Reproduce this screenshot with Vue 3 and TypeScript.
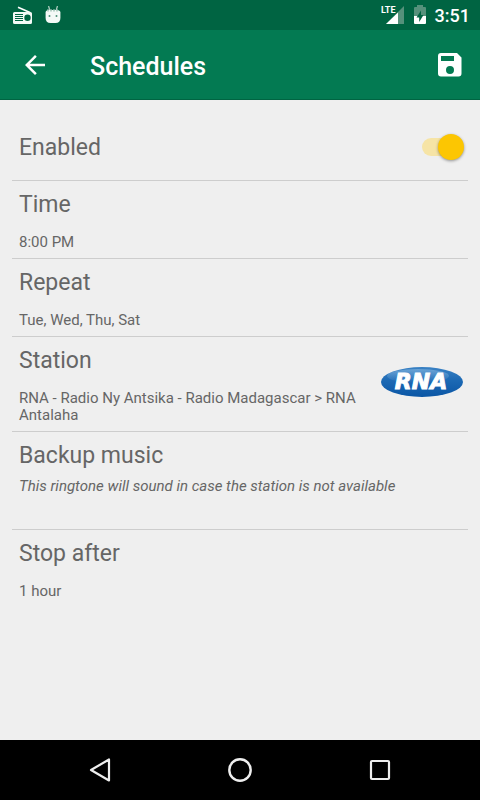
<script setup lang="ts">
import { ref } from 'vue'

interface Setting {
  title: string
  value: string
  kind?: 'station' | 'hint'
}

const enabled = ref(true)

const settings: Setting[] = [
  { title: 'Time', value: '8:00 PM' },
  { title: 'Repeat', value: 'Tue, Wed, Thu, Sat' },
  { title: 'Station', value: 'RNA - Radio Ny Antsika - Radio Madagascar > RNA Antalaha', kind: 'station' },
  { title: 'Backup music', value: 'This ringtone will sound in case the station is not available', kind: 'hint' },
  { title: 'Stop after', value: '1 hour' },
]
</script>

<template>
  <div class="screen">
    <div class="status">
      <div class="status-group notices">
        <svg width="20" height="18" viewBox="0 0 20 18" aria-hidden="true">
          <path d="M5 1.200 17 6.500" stroke="#fff" stroke-width="1.600" />
          <path fill="#f4faf7" fill-rule="evenodd" d="M1.500 6h16q1.500 0 1.500 1.500v9q0 1.500-1.500 1.500h-16Q0 18 0 16.500v-9Q0 6 1.500 6ZM2 8v1h8V8Zm0 2v1h8v-1Zm0 2v1h8v-1Zm0 2v1h8v-1ZM14.500 8.500a3.200 3.200 0 1 0 0 6.400 3.200 3.200 0 0 0 0-6.400Z" />
        </svg>
        <svg width="16" height="18" viewBox="0 0 16 18" aria-hidden="true">
          <path d="M3.500 0 4.800 4M12.500 0 11.200 4" stroke="#a9cbbd" stroke-width="1.300" />
          <path fill="#f4faf7" d="M.6 6.500Q.6 4 4 4h8q3.400 0 3.400 2.500V12q0 5-4.900 5h-5Q.6 17 .6 12Z" />
          <path d="M2 4.500h12" stroke="#b4d0c5" stroke-width="2" stroke-dasharray="2 1" />
          <circle cx="4.500" cy="10" r="1" fill="#4a8f76" />
          <circle cx="11.500" cy="10" r="1" fill="#4a8f76" />
        </svg>
      </div>
      <div class="status-group">
        <svg width="24" height="20" viewBox="0 0 24 20" aria-hidden="true">
          <path fill="#55917b" d="M23 1v18H5Z" />
          <path fill="#fff" d="M17 7.500V19H5Z" />
          <path fill="#006442" d="M0 0h14v9H0z" />
          <text class="lte" x="0" y="8">LTE</text>
        </svg>
        <svg class="battery" width="14" height="20" viewBox="0 0 14 20" aria-hidden="true">
          <path fill="#55917b" d="M4 0h6v2h2q1 0 1 1v8H1V3q0-1 1-1h2Z" />
          <path fill="#fff" d="M1 11h12v7q0 1-1 1H2q-1 0-1-1Z" />
          <path fill="#006442" d="M8 5.500 3.500 12.500h2.700V17L10.500 10H8Z" />
        </svg>
        <span class="clock">3:51</span>
      </div>
    </div>

    <header class="toolbar">
      <button class="icon-button" type="button" aria-label="Back">
        <svg width="30" height="30" viewBox="0 0 24 24" aria-hidden="true">
          <path fill="#fff" d="M20 11H7.830l5.590-5.590L12 4l-8 8 8 8 1.410-1.410L7.830 13H20v-2z" />
        </svg>
      </button>
      <h1>Schedules</h1>
      <button class="icon-button" type="button" aria-label="Save">
        <svg width="24" height="24" viewBox="0 0 24 24" aria-hidden="true">
          <path fill="#fff" fill-rule="evenodd" d="M3 0h16l4.500 4.500v16q0 3-3 3H3q-3 0-3-3V3q0-3 3-3Zm0 3v5h13V3Zm9 10a4 4 0 1 0 0 8 4 4 0 0 0 0-8Z" />
        </svg>
      </button>
    </header>

    <main>
      <label class="row enabled">
        <span class="title">Enabled</span>
        <input v-model="enabled" class="switch" type="checkbox" role="switch" />
      </label>
      <button v-for="item in settings" :key="item.title" type="button" class="row" :class="item.kind">
        <span class="copy">
          <span class="title">{{ item.title }}</span>
          <span class="value">{{ item.value }}</span>
        </span>
        <svg v-if="item.kind === 'station'" class="logo" width="84" height="32" viewBox="0 0 84 32" aria-hidden="true">
          <defs>
            <linearGradient id="rna-blue" x1="0" y1="0" x2="0" y2="1">
              <stop offset="0" stop-color="#3b82c4" />
              <stop offset="0.450" stop-color="#1c69b4" />
              <stop offset="1" stop-color="#0b56a5" />
            </linearGradient>
            <linearGradient id="rna-shine" x1="0" y1="0" x2="0" y2="1">
              <stop offset="0" stop-color="#8cbbe2" stop-opacity="0.600" />
              <stop offset="1" stop-color="#8cbbe2" stop-opacity="0" />
            </linearGradient>
          </defs>
          <ellipse cx="42" cy="16" rx="41" ry="15" fill="url(#rna-blue)" />
          <ellipse cx="38" cy="10" rx="31" ry="7" fill="url(#rna-shine)" />
          <text class="logo-text" x="41" y="23" text-anchor="middle">RNA</text>
        </svg>
      </button>
    </main>

    <nav aria-label="System">
      <button type="button" aria-label="Back">
        <svg width="24" height="26" viewBox="0 0 24 26" aria-hidden="true">
          <path d="M21 2.500v21L3 13Z" fill="none" stroke="#eee" stroke-width="2.200" stroke-linejoin="round" />
        </svg>
      </button>
      <button type="button" aria-label="Home">
        <svg width="26" height="26" viewBox="0 0 26 26" aria-hidden="true">
          <circle cx="13" cy="13" r="10.700" fill="none" stroke="#eee" stroke-width="2.400" />
        </svg>
      </button>
      <button type="button" aria-label="Recent apps">
        <svg width="24" height="24" viewBox="0 0 24 24" aria-hidden="true">
          <rect x="3" y="3" width="18" height="18" rx="1" fill="none" stroke="#eee" stroke-width="2.200" />
        </svg>
      </button>
    </nav>
  </div>
</template>

<style>
body {
  background: #efefef;
}
</style>

<style scoped>
.screen {
  display: flex;
  flex-direction: column;
  min-height: 100vh;
  background: #efefef;
  color: #666;
  font-family: Roboto, "Liberation Sans", sans-serif;
}
button {
  padding: 0;
  border: 0;
  background: none;
  color: inherit;
  font: inherit;
  cursor: pointer;
}
svg {
  display: block;
  flex: none;
}
.status {
  display: flex;
  align-items: center;
  justify-content: space-between;
  height: 30px;
  padding: 0 10px 0 13px;
  background: #006442;
}
.status-group {
  display: flex;
  align-items: center;
  gap: 8px;
}
.notices {
  gap: 12px;
}
.lte {
  fill: #fff;
  font-size: 9px;
  font-weight: 700;
}
.clock {
  padding-top: 2px;
  color: #fff;
  font-size: 18px;
  font-weight: 500;
  line-height: 28px;
}
.toolbar {
  display: flex;
  align-items: center;
  box-sizing: border-box;
  height: 70px;
  padding: 0 18px 0 20px;
  border-bottom: 1px solid #006442;
  background: #037a52;
}
h1 {
  flex: 1;
  margin: 0 0 0 40px;
  padding-top: 4px;
  color: #fff;
  font-size: 25px;
  font-weight: 500;
  line-height: 30px;
}
main {
  flex: 1;
  padding: 14px 12px;
}
.row {
  display: flex;
  align-items: center;
  box-sizing: border-box;
  width: 100%;
  padding: 11px 4px 7px 7px;
  border-bottom: 1px solid #cdcdcd;
  text-align: left;
}
.row:last-child {
  border-bottom: 0;
}
.enabled {
  align-items: flex-start;
  justify-content: space-between;
  height: 67px;
  padding-top: 20px;
}
.copy {
  display: flex;
  flex: 1;
  flex-direction: column;
  gap: 16px;
}
.title {
  font-size: 23px;
  line-height: 26px;
}
.enabled .title {
  line-height: 28px;
}
.value {
  font-size: 15px;
  line-height: 17px;
}
.station {
  gap: 12px;
}
.logo {
  margin-bottom: 8px;
}
.hint {
  padding-bottom: 34px;
}
.hint .copy {
  gap: 9px;
}
.hint .value {
  font-style: italic;
}
.logo-text {
  fill: #fff;
  stroke: #fff;
  stroke-width: 1px;
  font-family: "DejaVu Sans", sans-serif;
  font-size: 22px;
  font-style: italic;
  font-weight: 700;
}
.switch {
  display: grid;
  align-items: center;
  width: 42px;
  height: 26px;
  margin: 0;
  appearance: none;
  cursor: pointer;
}
.switch::before,
.switch::after {
  grid-area: 1 / 1;
  content: "";
}
.switch::before {
  width: 36px;
  height: 18px;
  border-radius: 9px;
  background: #c9c9c9;
}
.switch::after {
  width: 26px;
  height: 26px;
  border-radius: 50%;
  background: #fafafa;
  box-shadow: 0 1px 3px rgba(0, 0, 0, 0.4);
}
.switch:checked::before {
  background: #f6e4a6;
}
.switch:checked::after {
  justify-self: end;
  background: #fcc602;
}
nav {
  display: flex;
  justify-content: center;
  gap: 60px;
  height: 60px;
  background: #000;
}
nav button {
  display: flex;
  align-items: center;
  justify-content: center;
  width: 80px;
}
</style>
